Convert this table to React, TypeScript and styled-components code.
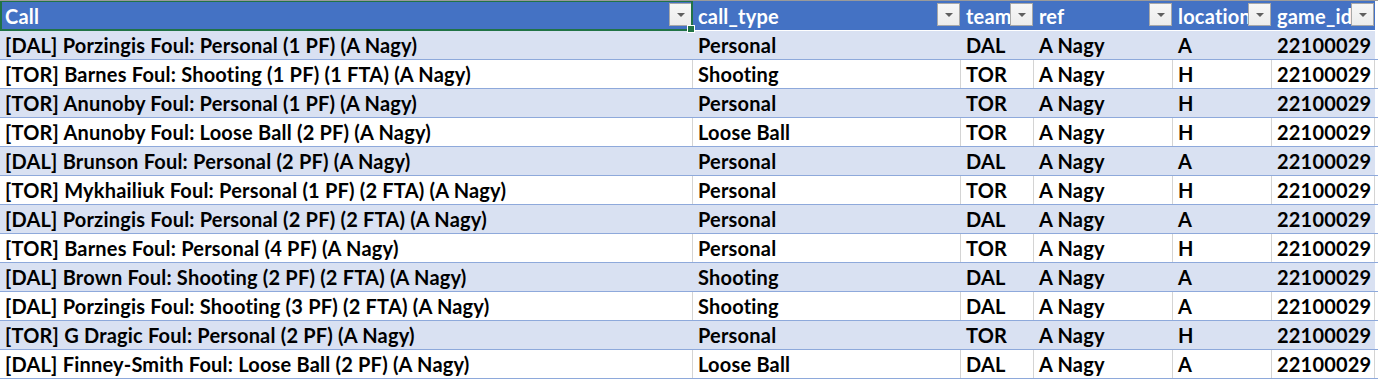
import styled, { createGlobalStyle } from 'styled-components';

const GlobalStyle = createGlobalStyle`
  html, body {
    margin: 0;
    padding: 0;
    background: #ffffff;
  }
  body {
    font-family: Lato, "Liberation Sans", sans-serif;
  }
`;

const COLS = '693px 268px 73px 139px 99px 103px 3px';

const Sheet = styled.div`
  position: relative;
  width: 1378px;
  height: 380px;
  overflow: hidden;
  background: #ffffff;
  border-top: 1px solid #9a9a9a;
  box-sizing: border-box;
`;

const HeaderRow = styled.div`
  display: grid;
  grid-template-columns: ${COLS};
  height: 29px;
  border-bottom: 1px solid #ffffff;
`;

const HeadCell = styled.div<{ $blank?: boolean }>`
  position: relative;
  background: ${(p) => (p.$blank ? '#ffffff' : '#4472c4')};
  color: #ffffff;
  font-weight: 700;
  font-size: 20px;
  letter-spacing: 0.2px;
  line-height: 30px;
  padding-left: 5px;
  white-space: nowrap;
  overflow: hidden;
`;

const FilterButton = styled.span`
  position: absolute;
  top: 2px;
  right: 1px;
  width: 23px;
  height: 23px;
  box-sizing: border-box;
  background: linear-gradient(#f7f7f7, #ececec);
  border: 1px solid #a8a8a8;
  display: flex;
  align-items: center;
  justify-content: center;
`;

const Row = styled.div<{ $band: boolean }>`
  display: grid;
  grid-template-columns: ${COLS};
  height: 29px;
  box-sizing: border-box;
  border-bottom: 1px solid #8ea9db;
  background: ${(p) => (p.$band ? '#d9e1f2' : '#ffffff')};
`;

const Cell = styled.div<{ $band: boolean; $right?: boolean; $blank?: boolean }>`
  color: #000000;
  font-weight: 700;
  font-size: 20px;
  letter-spacing: 0.2px;
  line-height: 29px;
  padding: 0 4px 0 5px;
  white-space: nowrap;
  overflow: hidden;
  text-align: ${(p) => (p.$right ? 'right' : 'left')};
  border-right: 1px solid ${(p) => (p.$band ? 'transparent' : '#d4d4d4')};
  background: ${(p) => (p.$blank ? '#ffffff' : 'transparent')};
`;

const Selection = styled.div`
  position: absolute;
  left: 0;
  top: -1px;
  width: 693px;
  height: 31px;
  box-sizing: border-box;
  border: 2px solid #217346;
  pointer-events: none;
`;

const Handle = styled.div`
  position: absolute;
  right: -4px;
  bottom: -4px;
  width: 6px;
  height: 6px;
  background: #217346;
  border: 1px solid #ffffff;
`;

const Arrow = () => (
  <svg width="10" height="6" viewBox="0 0 10 6">
    <path d="M1 1 L9 1 L5 5 Z" fill="#5f5f5f" />
  </svg>
);

const headers = ['Call', 'call_type', 'team', 'ref', 'location', 'game_id'];

type Foul = { call: string; type: string; team: string; loc: string };

const rows: Foul[] = [
  { call: '[DAL] Porzingis Foul: Personal (1 PF) (A Nagy)', type: 'Personal', team: 'DAL', loc: 'A' },
  { call: '[TOR] Barnes Foul: Shooting (1 PF) (1 FTA) (A Nagy)', type: 'Shooting', team: 'TOR', loc: 'H' },
  { call: '[TOR] Anunoby Foul: Personal (1 PF) (A Nagy)', type: 'Personal', team: 'TOR', loc: 'H' },
  { call: '[TOR] Anunoby Foul: Loose Ball (2 PF) (A Nagy)', type: 'Loose Ball', team: 'TOR', loc: 'H' },
  { call: '[DAL] Brunson Foul: Personal (2 PF) (A Nagy)', type: 'Personal', team: 'DAL', loc: 'A' },
  { call: '[TOR] Mykhailiuk Foul: Personal (1 PF) (2 FTA) (A Nagy)', type: 'Personal', team: 'TOR', loc: 'H' },
  { call: '[DAL] Porzingis Foul: Personal (2 PF) (2 FTA) (A Nagy)', type: 'Personal', team: 'DAL', loc: 'A' },
  { call: '[TOR] Barnes Foul: Personal (4 PF) (A Nagy)', type: 'Personal', team: 'TOR', loc: 'H' },
  { call: '[DAL] Brown Foul: Shooting (2 PF) (2 FTA) (A Nagy)', type: 'Shooting', team: 'DAL', loc: 'A' },
  { call: '[DAL] Porzingis Foul: Shooting (3 PF) (2 FTA) (A Nagy)', type: 'Shooting', team: 'DAL', loc: 'A' },
  { call: '[TOR] G Dragic Foul: Personal (2 PF) (A Nagy)', type: 'Personal', team: 'TOR', loc: 'H' },
  { call: '[DAL] Finney-Smith Foul: Loose Ball (2 PF) (A Nagy)', type: 'Loose Ball', team: 'DAL', loc: 'A' },
];

export default function App() {
  return (
    <>
      <GlobalStyle />
      <Sheet>
        <HeaderRow>
          {headers.map((h) => (
            <HeadCell key={h}>
              {h}
              <FilterButton>
                <Arrow />
              </FilterButton>
            </HeadCell>
          ))}
          <HeadCell $blank />
        </HeaderRow>
        {rows.map((r, i) => {
          const band = i % 2 === 0;
          return (
            <Row key={i} $band={band}>
              <Cell $band={band}>{r.call}</Cell>
              <Cell $band={band}>{r.type}</Cell>
              <Cell $band={band}>{r.team}</Cell>
              <Cell $band={band}>A Nagy</Cell>
              <Cell $band={band}>{r.loc}</Cell>
              <Cell $band={band} $right>
                22100029
              </Cell>
              <Cell $band={false} $blank />
            </Row>
          );
        })}
        <Selection>
          <Handle />
        </Selection>
      </Sheet>
    </>
  );
}
